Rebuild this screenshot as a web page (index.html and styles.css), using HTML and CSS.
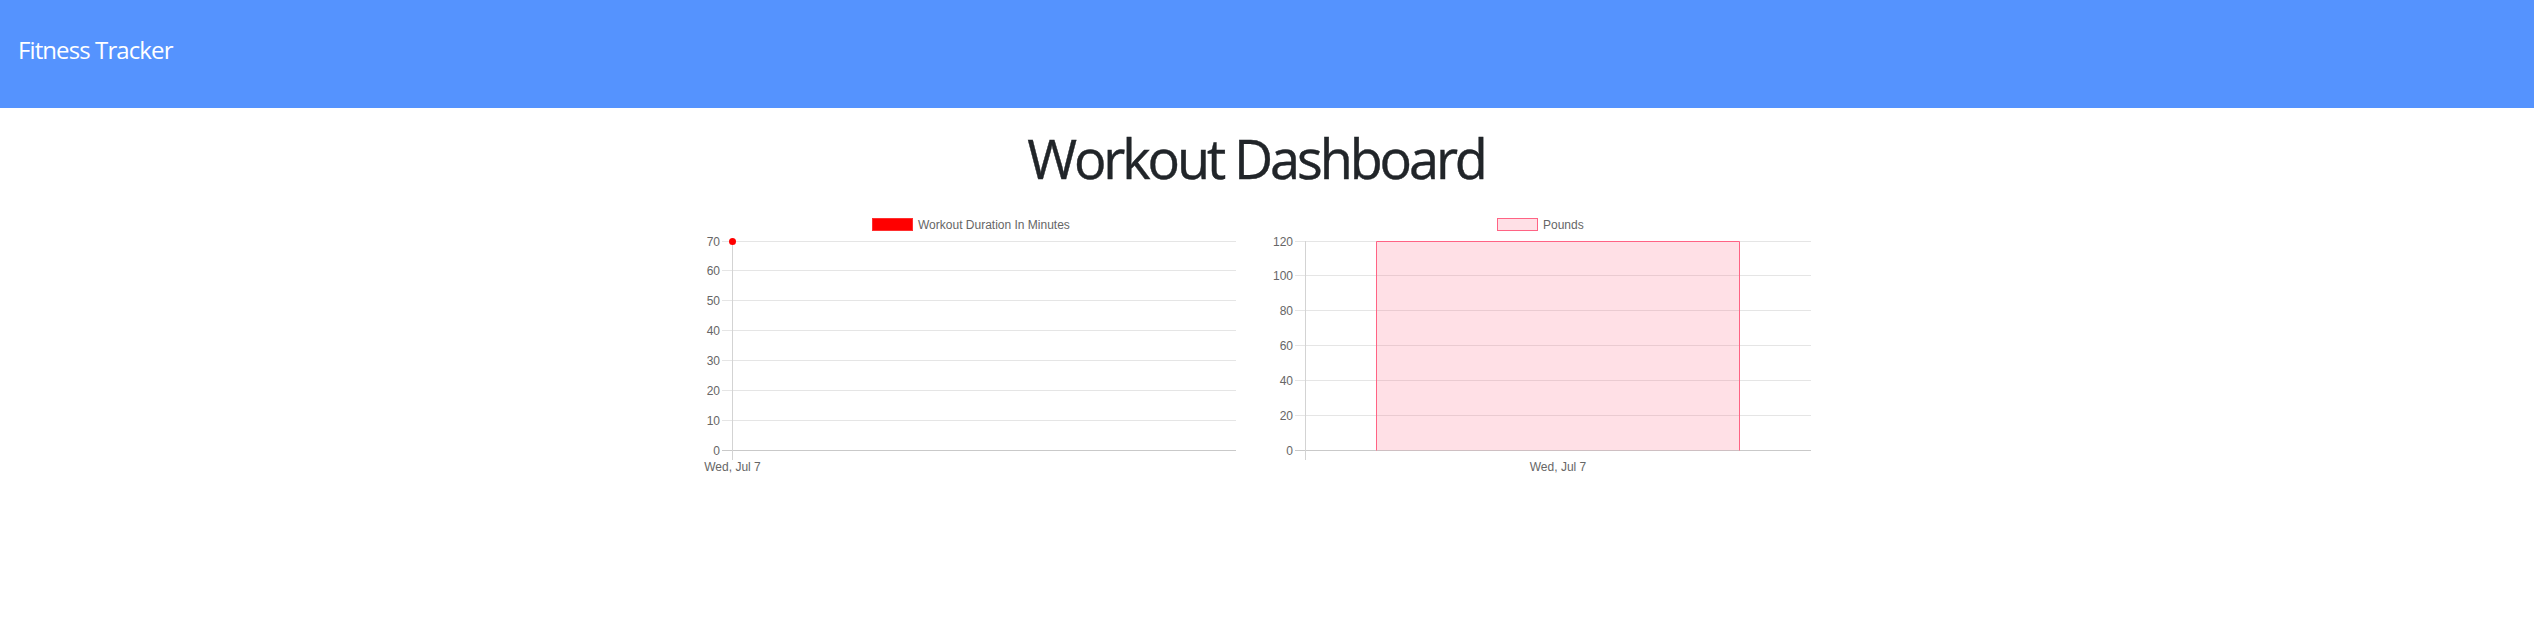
FILE: index.html
```html
<!DOCTYPE html>
<html lang="en">
<head>
<meta charset="utf-8">
<title>Fitness Tracker</title>
<link rel="stylesheet" href="styles.css">
</head>
<body>
<nav class="navbar">
  <span class="brand">Fitness Tracker</span>
</nav>
<h1 class="page-title">Workout Dashboard</h1>
<div class="charts">
  <div class="chart-col">
    <svg class="chart" width="570" height="290" viewBox="0 0 570 290">
      <rect x="175.5" y="18.5" width="40" height="12" fill="#ff0000" stroke="#ff3030"/>
      <text class="lbl" x="221" y="29">Workout Duration In Minutes</text>
      <g class="grid">
        <line x1="25" x2="539" y1="41.5" y2="41.5"/>
        <line x1="25" x2="539" y1="70.5" y2="70.5"/>
        <line x1="25" x2="539" y1="100.5" y2="100.5"/>
        <line x1="25" x2="539" y1="130.5" y2="130.5"/>
        <line x1="25" x2="539" y1="160.5" y2="160.5"/>
        <line x1="25" x2="539" y1="190.5" y2="190.5"/>
        <line x1="25" x2="539" y1="220.5" y2="220.5"/>
      </g>
      <line class="zero" x1="25" x2="539" y1="250.5" y2="250.5"/>
      <line class="axis" x1="35.5" x2="35.5" y1="41" y2="260"/>
      <g class="lbl ylbl">
        <text x="23" y="45.5">70</text>
        <text x="23" y="74.5">60</text>
        <text x="23" y="104.5">50</text>
        <text x="23" y="134.5">40</text>
        <text x="23" y="164.5">30</text>
        <text x="23" y="194.5">20</text>
        <text x="23" y="224.5">10</text>
        <text x="23" y="254.5">0</text>
      </g>
      <text class="lbl xlbl" x="35.5" y="271">Wed, Jul 7</text>
      <circle cx="35.5" cy="41.5" r="3.5" fill="#ff0000"/>
    </svg>
  </div>
  <div class="chart-col">
    <svg class="chart" width="570" height="290" viewBox="0 0 570 290">
      <rect x="230.5" y="18.5" width="40" height="12" fill="rgba(255,99,132,0.2)" stroke="rgb(255,99,132)"/>
      <text class="lbl" x="276" y="29">Pounds</text>
      <g class="grid">
        <line x1="28" x2="544" y1="41.5" y2="41.5"/>
        <line x1="28" x2="544" y1="75.5" y2="75.5"/>
        <line x1="28" x2="544" y1="110.5" y2="110.5"/>
        <line x1="28" x2="544" y1="145.5" y2="145.5"/>
        <line x1="28" x2="544" y1="180.5" y2="180.5"/>
        <line x1="28" x2="544" y1="215.5" y2="215.5"/>
      </g>
      <line class="zero" x1="28" x2="544" y1="250.5" y2="250.5"/>
      <line class="axis" x1="38.5" x2="38.5" y1="41" y2="260"/>
      <rect x="109.5" y="41.5" width="363" height="209" fill="rgba(255,99,132,0.2)"/>
      <path d="M109.5 250.5 V41.5 H472.5 V250.5" fill="none" stroke="rgb(255,99,132)" stroke-width="1"/>
      <g class="lbl ylbl">
        <text x="26" y="45.5">120</text>
        <text x="26" y="79.5">100</text>
        <text x="26" y="114.5">80</text>
        <text x="26" y="149.5">60</text>
        <text x="26" y="184.5">40</text>
        <text x="26" y="219.5">20</text>
        <text x="26" y="254.5">0</text>
      </g>
      <text class="lbl xlbl" x="291" y="271">Wed, Jul 7</text>
    </svg>
  </div>
</div>
</body>
</html>
```

FILE: styles.css
```css
html, body {
  margin: 0;
  padding: 0;
  background: #ffffff;
}

body {
  font-family: "Open Sans", "Noto Sans", sans-serif;
  color: #212529;
}

.navbar {
  box-sizing: border-box;
  height: 108px;
  background: #5593fe;
  padding: 38px 18px 0;
}

.brand {
  display: block;
  font-size: 24px;
  line-height: 24px;
  color: #ffffff;
  letter-spacing: -0.9px;
}

.page-title {
  margin: 21px 0 13px;
  padding-right: 22px;
  font-size: 54px;
  line-height: 58px;
  font-weight: 400;
  text-align: center;
  letter-spacing: -3.1px;
  color: #212529;
  -webkit-text-stroke: 0.4px #212529;
}

.charts {
  width: 1140px;
  margin: 0 auto;
  display: grid;
  grid-template-columns: 570px 570px;
}

.chart {
  display: block;
}

.chart line {
  shape-rendering: crispEdges;
}

.grid line {
  stroke: #e5e5e5;
  stroke-width: 1;
}

.zero {
  stroke: #c9c9c9;
  stroke-width: 1;
}

.axis {
  stroke: #d3d3d3;
  stroke-width: 1;
}

.lbl {
  font-family: "Liberation Sans", Arial, sans-serif;
  font-size: 12px;
  fill: #666666;
}

.ylbl text {
  text-anchor: end;
}

.xlbl {
  text-anchor: middle;
}
```
